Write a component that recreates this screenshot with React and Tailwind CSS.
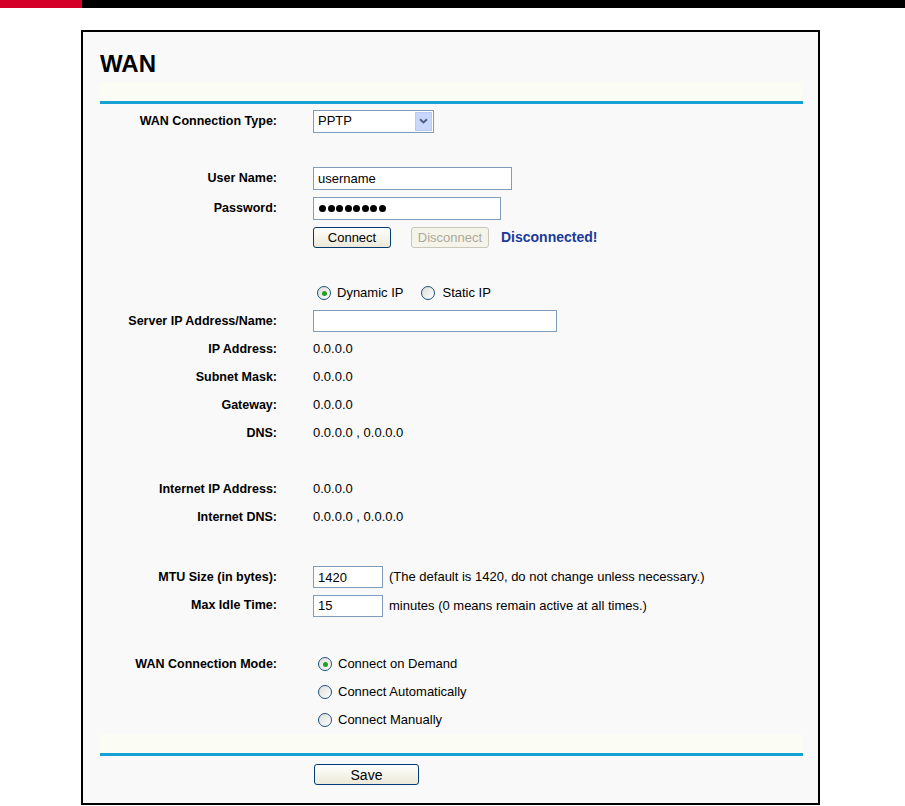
function Row({ label, h = "h-[28px]", children }) {
  return (
    <div className={`flex items-center ${h}`}>
      <div className="w-[177px] shrink-0 text-right font-bold text-[12.5px] text-black">{label}</div>
      <div className="pl-[36px] flex items-center text-[13px] text-black">{children}</div>
    </div>
  );
}

function Radio({ checked, className = "" }) {
  return (
    <span className={`flex w-[14px] h-[14px] rounded-full border border-[#1c5180] bg-linear-to-br from-[#dcdcd7] to-white items-center justify-center ${className}`}>
      {checked && <span className="w-[5px] h-[5px] rounded-full bg-[#21a121]" />}
    </span>
  );
}

function TextBox({ w, h = "h-[23px]", value }) {
  return (
    <input
      type="text"
      readOnly
      defaultValue={value}
      className={`${w} ${h} border border-[#7f9db9] bg-white px-[4px] text-[13px] text-black outline-none`}
      style={{ fontFamily: '"Liberation Sans", Arial, sans-serif' }}
    />
  );
}

export default function App() {
  return (
    <div className="min-h-screen bg-white" style={{ fontFamily: '"Liberation Sans", Arial, sans-serif' }}>
      {/* top strip */}
      <div className="flex h-[8px]">
        <div className="w-[82px] bg-[#d50027]" />
        <div className="flex-1 bg-black" />
      </div>

      {/* frame */}
      <div className="ml-[81px] mt-[22px] w-[739px] h-[775px] border-2 border-black bg-[#f9f9f9] pl-[17px] pr-[15px]">
        <h1 className="pt-[18px] mb-[4px] text-[24px] leading-[28px] font-bold text-black box-content">WAN</h1>
        <div className="h-[19px] bg-[#fbfcf3]" />
        <div className="h-[3px] bg-[#16a1d5]" />

        <div className="mt-[3px]">
          <Row label="WAN Connection Type:">
            <div className="w-[121px] h-[23px] border border-[#7f9db9] bg-white flex items-center justify-between">
              <span className="pl-[4px] text-[13px]">PPTP</span>
              <span className="w-[17px] h-[19px] mr-[1px] bg-[#c8d7fb] border border-[#b9cbf5] flex items-center justify-center">
                <svg width="9" height="6" viewBox="0 0 9 6">
                  <path d="M1 1.2 L4.5 4.5 L8 1.2" fill="none" stroke="#4d6185" strokeWidth="2" />
                </svg>
              </span>
            </div>
          </Row>
          <div className="h-[28px]" />
          <Row label="User Name:" h="h-[30px]">
            <TextBox w="w-[199px]" value="username" />
          </Row>
          <Row label="Password:" h="h-[30px]">
            <div className="w-[188px] h-[23px] border border-[#7f9db9] bg-white flex items-center gap-[1.5px] pl-[5px]">
              {[0, 1, 2, 3, 4, 5, 6, 7].map((i) => (
                <span key={i} className="w-[7px] h-[7px] rounded-full bg-black" />
              ))}
            </div>
          </Row>
          <Row label="">
            <button className="w-[78px] h-[21px] border border-[#003c74] rounded-[3px] bg-linear-to-b from-white to-[#ece9d8] text-[13px] text-black">
              Connect
            </button>
            <button className="ml-[20px] w-[78px] h-[21px] border border-[#c9c7ba] rounded-[3px] bg-[#f5f4ea] text-[13px] text-[#aca899]">
              Disconnect
            </button>
            <span className="ml-[12px] text-[14px] font-bold text-[#1a3a99]">Disconnected!</span>
          </Row>
          <div className="h-[28px]" />
          <Row label="">
            <Radio checked className="ml-[4px]" />
            <span className="ml-[6px]">Dynamic IP</span>
            <Radio className="ml-[18px]" />
            <span className="ml-[7px]">Static IP</span>
          </Row>
          <Row label="Server IP Address/Name:">
            <TextBox w="w-[244px]" h="h-[22px]" value="" />
          </Row>
          <Row label="IP Address:">0.0.0.0</Row>
          <Row label="Subnet Mask:">0.0.0.0</Row>
          <Row label="Gateway:">0.0.0.0</Row>
          <Row label="DNS:">0.0.0.0 , 0.0.0.0</Row>
          <div className="h-[28px]" />
          <Row label="Internet IP Address:">0.0.0.0</Row>
          <Row label="Internet DNS:">0.0.0.0 , 0.0.0.0</Row>
          <div className="h-[32px]" />
          <Row label="MTU Size (in bytes):">
            <TextBox w="w-[70px]" h="h-[22px]" value="1420" />
            <span className="ml-[6px]">(The default is 1420, do not change unless necessary.)</span>
          </Row>
          <Row label="Max Idle Time:" h="h-[29px]">
            <TextBox w="w-[70px]" h="h-[22px]" value="15" />
            <span className="ml-[6px]">minutes (0 means remain active at all times.)</span>
          </Row>
          <div className="h-[30px]" />
          <Row label="WAN Connection Mode:">
            <Radio checked className="ml-[5px]" />
            <span className="ml-[6px]">Connect on Demand</span>
          </Row>
          <Row label="">
            <Radio className="ml-[5px]" />
            <span className="ml-[6px]">Connect Automatically</span>
          </Row>
          <Row label="">
            <Radio className="ml-[5px]" />
            <span className="ml-[6px]">Connect Manually</span>
          </Row>
        </div>

        <div className="mt-[1px] h-[18px] bg-[#fbfcf3]" />
        <div className="h-[3px] bg-[#16a1d5]" />
        <div className="mt-[7px] pl-[214px]">
          <button className="w-[105px] h-[21px] border border-[#003c74] rounded-[3px] bg-linear-to-b from-white to-[#ece9d8] text-[14px] text-black">
            Save
          </button>
        </div>
      </div>
    </div>
  );
}
